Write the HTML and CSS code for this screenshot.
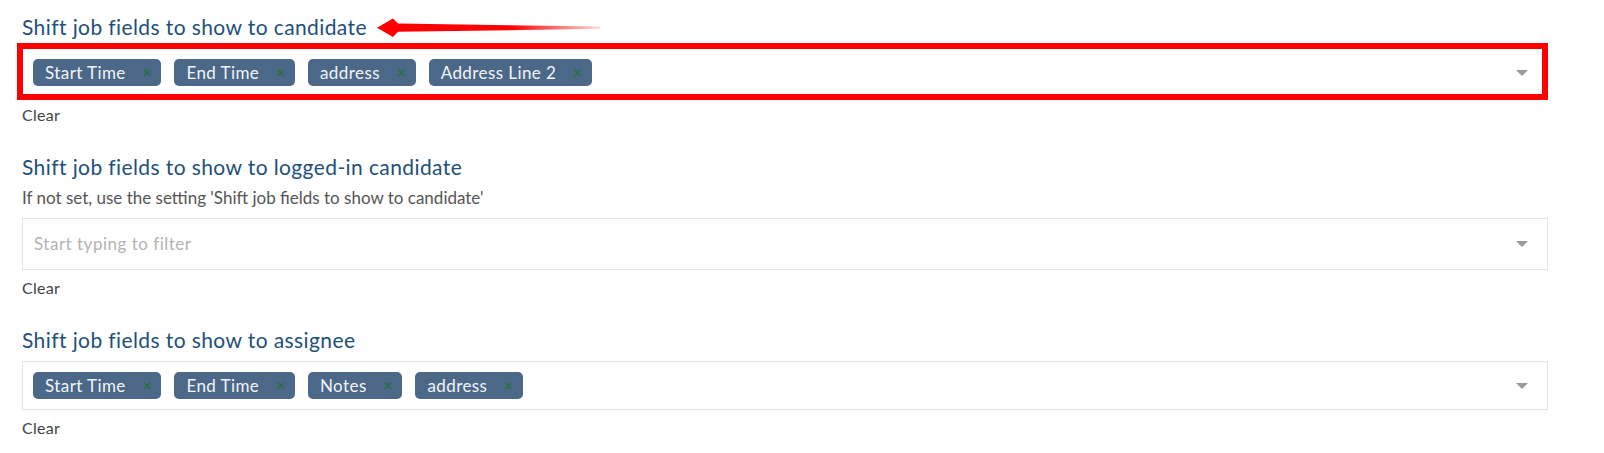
FILE: index.html
```html
<!DOCTYPE html>
<html>
<head>
<meta charset="utf-8">
<link rel="stylesheet" href="styles.css">
</head>
<body>
<div class="page">
  <section class="field">
    <h2 class="label">Shift job fields to show to candidate</h2>
    <div class="select">
      <div class="chips">
        <span class="chip">Start Time<span class="x">×</span></span>
        <span class="chip">End Time<span class="x">×</span></span>
        <span class="chip">address<span class="x">×</span></span>
        <span class="chip">Address Line 2<span class="x">×</span></span>
      </div>
      <span class="caret"></span>
    </div>
    <div class="clear">Clear</div>
  </section>

  <section class="field">
    <h2 class="label">Shift job fields to show to logged-in candidate</h2>
    <p class="desc">If not set, use the setting 'Shift job fields to show to candidate'</p>
    <div class="select empty">
      <div class="chips">
        <span class="placeholder">Start typing to filter</span>
      </div>
      <span class="caret"></span>
    </div>
    <div class="clear">Clear</div>
  </section>

  <section class="field">
    <h2 class="label">Shift job fields to show to assignee</h2>
    <div class="select">
      <div class="chips">
        <span class="chip">Start Time<span class="x">×</span></span>
        <span class="chip">End Time<span class="x">×</span></span>
        <span class="chip">Notes<span class="x">×</span></span>
        <span class="chip">address<span class="x">×</span></span>
      </div>
      <span class="caret"></span>
    </div>
    <div class="clear">Clear</div>
  </section>

  <div class="annot-box"></div>
  <svg class="annot-arrow" width="226" height="22" viewBox="0 0 226 22">
    <defs>
      <linearGradient id="fade" x1="0" y1="0" x2="1" y2="0">
        <stop offset="0" stop-color="#ff0000"/>
        <stop offset="0.6" stop-color="#ff0000"/>
        <stop offset="1" stop-color="#ff0000" stop-opacity="0.15"/>
      </linearGradient>
    </defs>
    <polygon fill="url(#fade)" points="3,10.7 19,1.5 24,6.5 226,9.6 226,11.8 24,14.8 19,20 "/>
  </svg>
</div>
</body>
</html>
```

FILE: styles.css
```css
* { box-sizing: border-box; }

html, body {
  margin: 0;
  padding: 0;
  background: #ffffff;
}

body {
  font-family: "Lato", "Noto Sans", sans-serif;
  color: #444444;
}

.page {
  position: relative;
  width: 1604px;
  padding: 14px 56px 0 22px;
}

.field {
  display: flex;
  flex-direction: column;
  margin-bottom: 30px;
}

.field + .field .label {
  margin-top: -1px;
}

.label {
  margin: 0;
  font-size: 21px;
  font-weight: 400;
  letter-spacing: 0.4px;
  line-height: 26px;
  color: #21507a;
}

.desc {
  margin: 8px 0 0;
  font-size: 17px;
  line-height: 20px;
  color: #555555;
}

.select {
  margin-top: 8px;
  display: flex;
  align-items: center;
  border: 1px solid #e4e4e4;
  background: #ffffff;
  padding: 10px 19px 10px 10px;
  min-height: 49px;
}

.select.empty {
  margin-top: 10px;
  min-height: 52px;
}

.chips {
  flex: 1;
  display: flex;
  flex-wrap: wrap;
  gap: 13px;
  align-items: center;
}

.chip {
  display: inline-flex;
  align-items: center;
  height: 27px;
  padding: 0 10px 0 12px;
  border-radius: 5px;
  background: #4b6889;
  color: #f2f4f7;
  font-size: 17px;
  letter-spacing: 0.42px;
  line-height: 27px;
}

.x {
  margin-left: 17px;
  color: #2a6e40;
  font-size: 15px;
  font-weight: 700;
  letter-spacing: 0;
  line-height: 1;
}

.placeholder {
  padding-left: 1px;
  font-size: 17px;
  letter-spacing: 0.5px;
  line-height: 30px;
  color: #b3b3b3;
}

.caret {
  width: 0;
  height: 0;
  border-left: 6px solid transparent;
  border-right: 6px solid transparent;
  border-top: 6px solid #9a9a9a;
}

.clear {
  margin-top: 8px;
  font-size: 16px;
  letter-spacing: 0.3px;
  line-height: 20px;
  color: #444444;
}

.annot-box {
  position: absolute;
  left: 17px;
  top: 43px;
  width: 1531px;
  height: 57px;
  border: 6px solid #ff0000;
}

.annot-arrow {
  position: absolute;
  left: 374px;
  top: 17px;
}
```
